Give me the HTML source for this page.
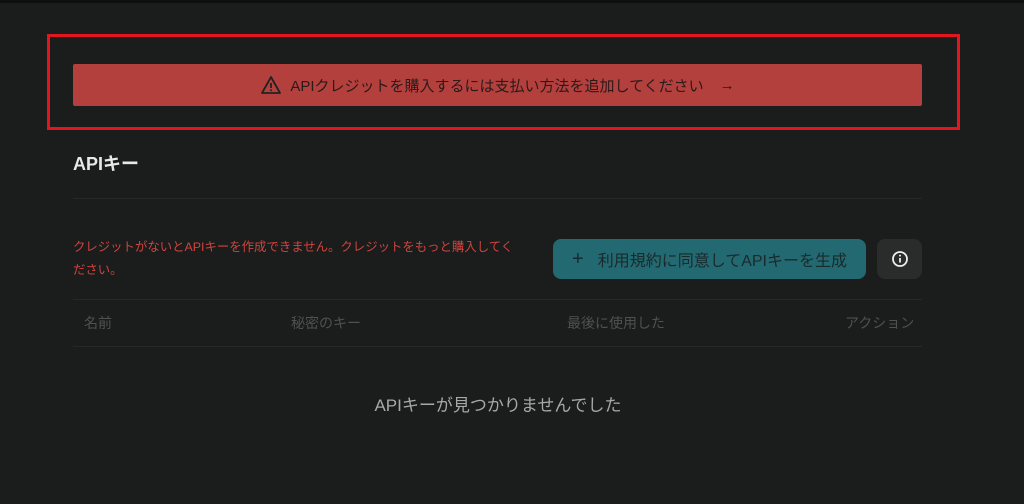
<!DOCTYPE html>
<html><head><meta charset="utf-8"><style>
body{margin:0;width:1024px;height:504px;background:#1b1c1c;font-family:"Liberation Sans","Noto Sans CJK JP",sans-serif;position:relative;overflow:hidden}
.a{position:absolute}
.top{left:0;top:0;width:1024px;height:3px;background:#0e0f10}
.frame{left:47px;top:34px;width:907px;height:90px;border:3px solid #e3151d}
.banner{left:73px;top:64px;width:849px;height:42px;background:#b3403d;border-radius:2px;display:flex;align-items:center;justify-content:center;color:#2a1a1a;font-size:15px;gap:8px}
.line{left:73px;width:849px;height:1px;background:#262727}
.h{top:313px;font-size:14px;color:#4f5050}
</style></head><body>
<div class="a top"></div>
<div class="a frame"></div>
<div class="a banner"><svg width="22" height="20" viewBox="0 0 22 20"><path d="M11 2 L20 18 H2 Z" fill="none" stroke="#222" stroke-width="1.8" stroke-linejoin="round"/><path d="M11 8v5" stroke="#222" stroke-width="1.8"/><circle cx="11" cy="15.3" r="1" fill="#222"/></svg><span>APIクレジットを購入するには支払い方法を追加してください</span><span style="margin-left:8px">→</span></div>
<div class="a" style="left:73px;top:150px;font-size:18px;font-weight:bold;color:#e8e8e8">APIキー</div>
<div class="a line" style="top:198px"></div>
<div class="a" style="left:73px;top:236px;width:445px;font-size:12.4px;line-height:23px;color:#d0443e">クレジットがないとAPIキーを作成できません。クレジットをもっと購入してください。</div>
<div class="a" style="left:553px;top:239px;width:313px;height:40px;background:#236971;border-radius:8px;display:flex;align-items:center;justify-content:center;color:#1a2a2c;font-size:16px"><span style="font-size:20px;margin-right:14px">+</span>利用規約に同意してAPIキーを生成</div>
<div class="a" style="left:877px;top:239px;width:45px;height:40px;background:#2a2b2b;border-radius:8px;display:flex;align-items:center;justify-content:center"><svg width="18" height="18" viewBox="0 0 18 18"><circle cx="9" cy="9" r="7" fill="none" stroke="#eee" stroke-width="1.8"/><path d="M9 8v4.5" stroke="#eee" stroke-width="1.8"/><circle cx="9" cy="5.6" r="1" fill="#eee"/></svg></div>
<div class="a line" style="top:299px"></div>
<div class="a h" style="left:84px">名前</div>
<div class="a h" style="left:291px">秘密のキー</div>
<div class="a h" style="left:567px">最後に使用した</div>
<div class="a h" style="left:845px">アクション</div>
<div class="a line" style="top:346px"></div>
<div class="a" style="left:0;width:996px;top:391px;text-align:center;font-size:17px;color:#a8a8a8">APIキーが見つかりませんでした</div>
</body></html>
